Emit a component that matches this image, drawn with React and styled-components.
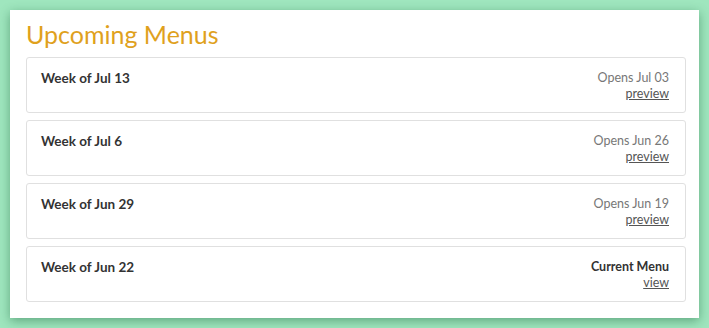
import React from "react";
import styled, { createGlobalStyle } from "styled-components";

const GlobalStyle = createGlobalStyle`
  body {
    margin: 0;
    background: #9fe6be;
    font-family: Lato, "Open Sans", sans-serif;
  }
`;

const Page = styled.div`
  padding: 10px;
  height: 328px;
  box-sizing: border-box;
`;

const Panel = styled.div`
  background: #fff;
  box-shadow: 0 3px 10px rgba(20, 90, 50, 0.45);
  padding: 12px 13px 16px 16px;
  height: 308px;
  box-sizing: border-box;
`;

const Title = styled.h1`
  margin: 0 0 11px;
  font-weight: 400;
  font-size: 25px;
  line-height: 24px;
  color: #dfa11d;
`;

const List = styled.div`
  display: flex;
  flex-direction: column;
  gap: 7px;
`;

const Card = styled.div`
  display: flex;
  justify-content: space-between;
  align-items: flex-start;
  height: 56px;
  box-sizing: border-box;
  border: 1px solid #e0e0e0;
  border-radius: 3px;
  padding: 12px 16px 0 14px;
`;

const Week = styled.div`
  font-weight: 700;
  font-size: 13.5px;
  line-height: 16px;
  color: #333;
`;

const Side = styled.div`
  text-align: right;
  font-size: 12.5px;
  line-height: 16px;
  color: #666;
`;

const Status = styled.div`
  font-weight: ${(p) => (p.$current ? 700 : 400)};
  color: ${(p) => (p.$current ? "#333" : "#777")};
`;

const Link = styled.a`
  color: #555;
  text-decoration: underline;
  cursor: pointer;
`;

const menus = [
  { week: "Week of Jul 13", status: "Opens Jul 03", link: "preview" },
  { week: "Week of Jul 6", status: "Opens Jun 26", link: "preview" },
  { week: "Week of Jun 29", status: "Opens Jun 19", link: "preview" },
  { week: "Week of Jun 22", status: "Current Menu", link: "view", current: true },
];

export default function App() {
  return (
    <>
      <GlobalStyle />
      <Page>
        <Panel>
          <Title>Upcoming Menus</Title>
          <List>
            {menus.map((m) => (
              <Card key={m.week}>
                <Week>{m.week}</Week>
                <Side>
                  <Status $current={m.current}>{m.status}</Status>
                  <Link>{m.link}</Link>
                </Side>
              </Card>
            ))}
          </List>
        </Panel>
      </Page>
    </>
  );
}
